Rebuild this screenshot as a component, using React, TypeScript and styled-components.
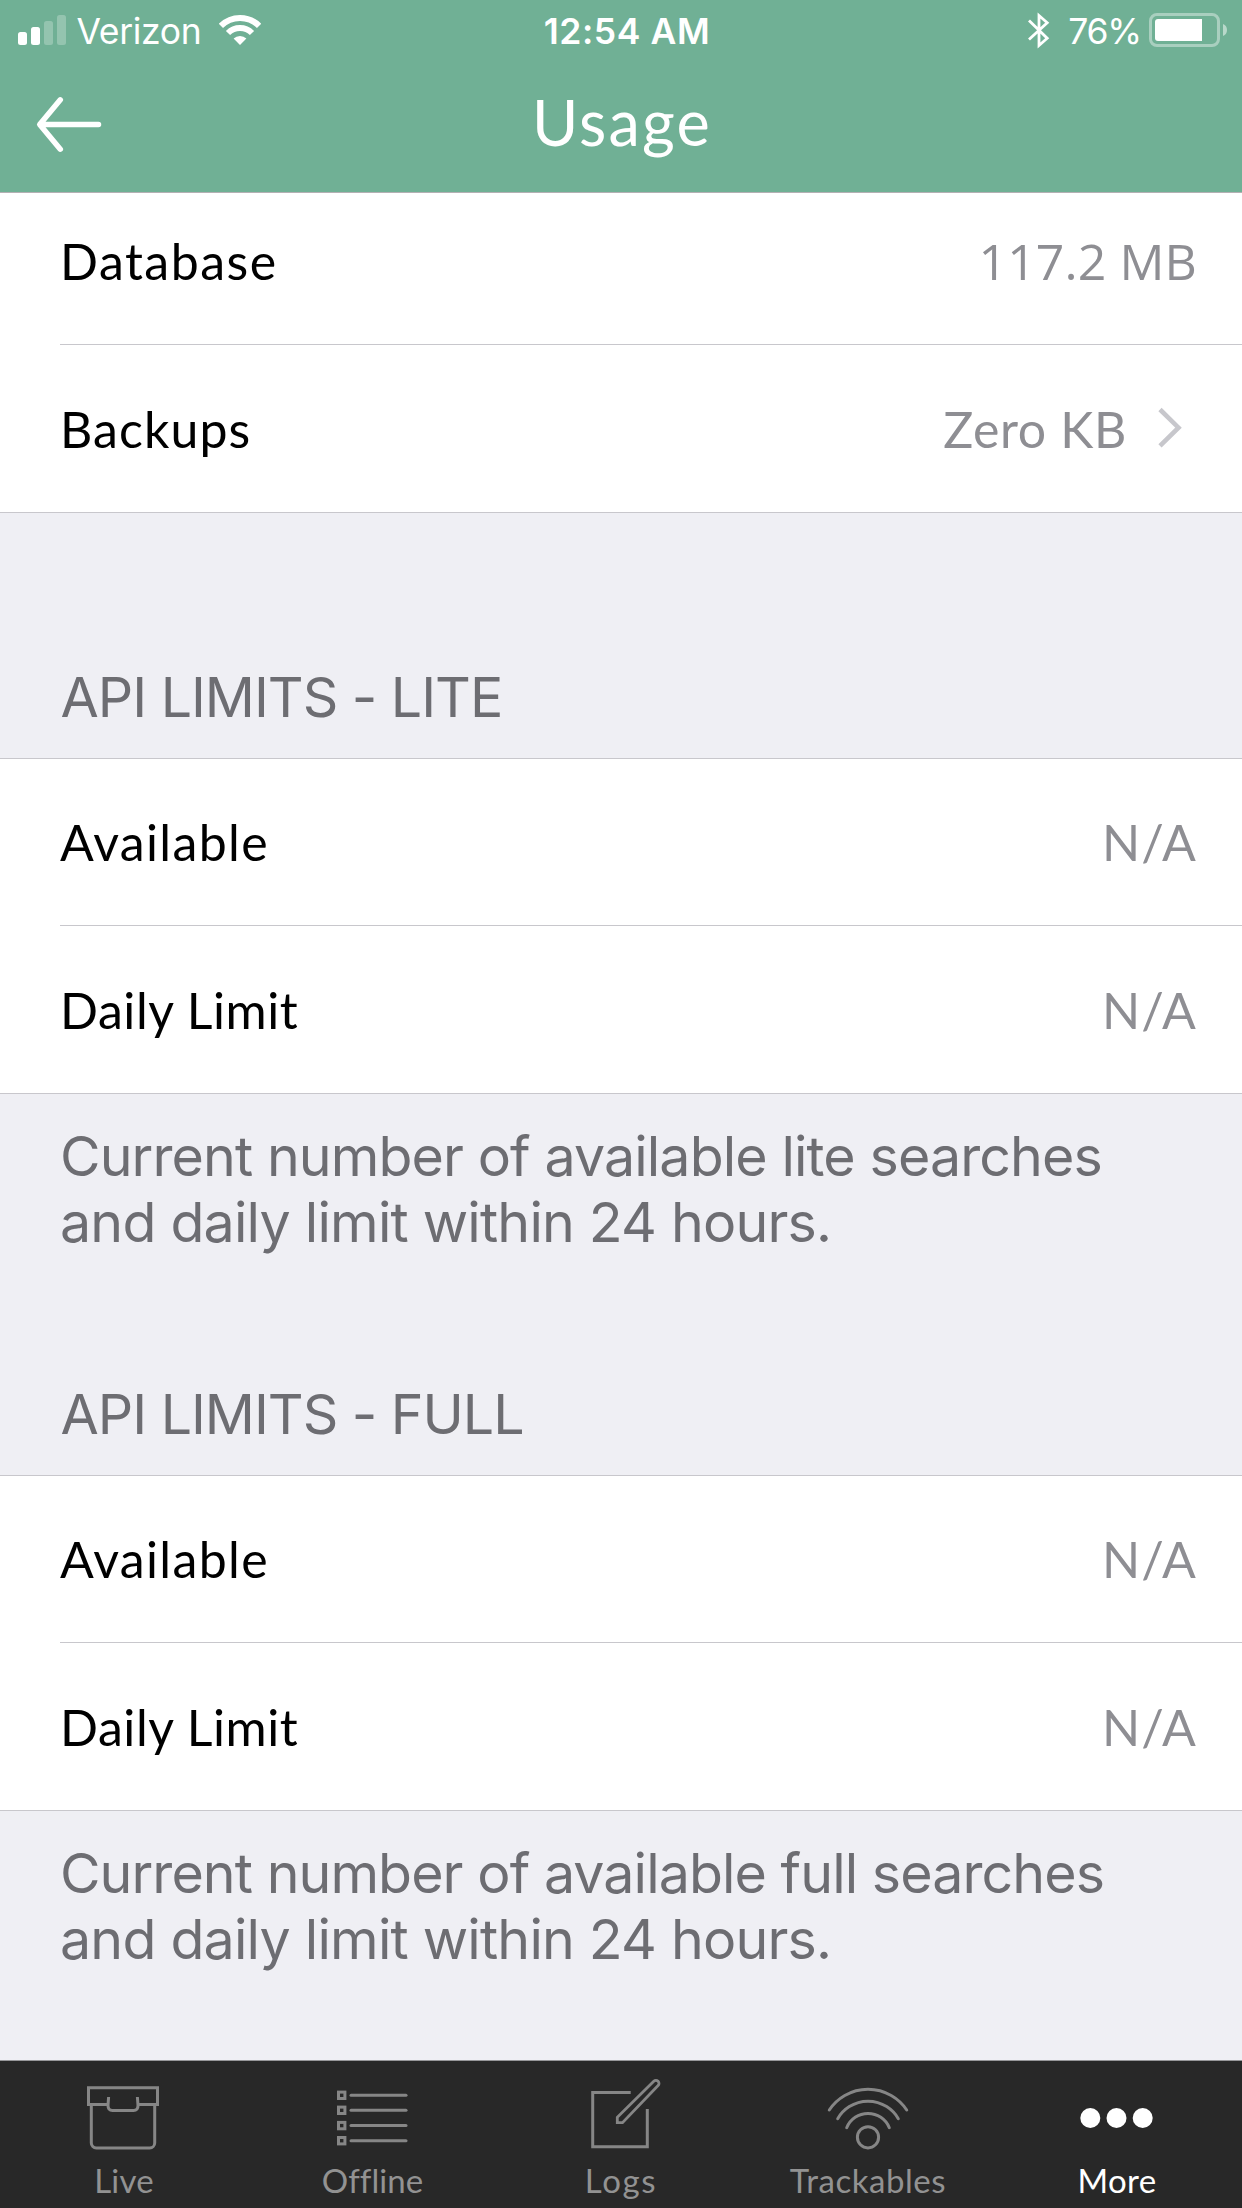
import React from 'react';
import styled, { createGlobalStyle } from 'styled-components';

const GlobalStyle = createGlobalStyle`
  * { box-sizing: border-box; }
  body { margin: 0; background: #efeff4; }
`;

const system = `Inter, "Liberation Sans", sans-serif`;
const brand = `Lato, "Open Sans", sans-serif`;

const Screen = styled.div`
  display: flex;
  flex-direction: column;
  width: 1242px;
  height: 2208px;
  overflow: hidden;
  background: #efeff4;
`;

const Header = styled.header`
  display: flex;
  flex-direction: column;
  height: 193px;
  flex: none;
  color: #fff;
  background: #70b095;
  border-bottom: 1px solid #b4b0b4;
`;

const StatusBar = styled.div`
  display: grid;
  grid-template-columns: 1fr auto 1fr;
  height: 60px;
  padding: 0 15px 0 18px;
`;

const StatusGroup = styled.div<{ $end?: boolean }>`
  display: flex;
  align-items: flex-start;
  justify-content: ${p => (p.$end ? 'flex-end' : 'flex-start')};
`;

const StatusIcon = styled.svg`
  display: block;
  flex: none;
  height: 60px;
`;

const StatusText = styled.span<{ $weight?: number; $spacing: number; $margin: string }>`
  margin: ${p => p.$margin};
  font: ${p => p.$weight ?? 400} 35.5px/43px ${system};
  letter-spacing: ${p => p.$spacing}px;
  white-space: nowrap;
`;

const NavBar = styled.nav`
  display: grid;
  grid-template-columns: 120px 1fr 120px;
  padding-top: 22px;
`;

const BackButton = styled.button`
  display: flex;
  padding: 0 0 0 30px;
  border: 0;
  color: inherit;
  background: none;
`;

const Title = styled.h1`
  margin: 0;
  padding: 2px 0 0 2px;
  font: 400 63px/75px ${brand};
  letter-spacing: 2.2px;
  text-align: center;
`;

const Group = styled.section`
  display: flex;
  flex-direction: column;
  background: #fff;
  border-bottom: 1px solid #c8c7cc;
`;

const Row = styled.div<{ $height: number; $chevron?: boolean }>`
  display: flex;
  align-items: flex-end;
  justify-content: space-between;
  height: ${p => p.$height}px;
  padding: 0 ${p => (p.$chevron ? 60 : 45)}px 53px 60px;
`;

const Separator = styled.div`
  height: 1px;
  margin-left: 60px;
  background: #c8c7cc;
`;

const Label = styled.span<{ $spacing: number }>`
  font: 400 50px/60px ${brand};
  letter-spacing: ${p => p.$spacing}px;
  color: #000;
`;

const Value = styled.span<{ $spacing: number; $numeric?: boolean }>`
  font: 400 50px/60px ${p => (p.$numeric ? '"Open Sans", sans-serif' : brand)};
  letter-spacing: ${p => p.$spacing}px;
  color: #8e8e93;
`;

const Detail = styled.div`
  display: flex;
  align-items: flex-end;
  gap: 31px;
`;

const Chevron = styled.svg`
  display: block;
  width: 24px;
  height: 60px;
`;

const SectionHeader = styled.h2<{ $height: number }>`
  display: flex;
  align-items: flex-end;
  height: ${p => p.$height}px;
  margin: 0;
  padding: 0 60px 28px 60.5px;
  border-bottom: 1px solid #c8c7cc;
  color: #6d6d72;
  font: 400 55.5px/67px ${system};
  letter-spacing: -1.03px;
`;

const Footnote = styled.p`
  display: flex;
  flex-direction: column;
  margin: 0;
  padding: 29px 0 0 60px;
  color: #6d6d72;
  font: 400 55.5px/66px ${system};
  white-space: nowrap;
`;

const FootnoteLine = styled.span<{ $spacing: number }>`
  letter-spacing: ${p => p.$spacing}px;
`;

const TabBar = styled.footer`
  display: grid;
  grid-template-columns: 246px 252px 246px 248px 250px;
  height: 148px;
  margin-top: auto;
  background: #282828;
  border-top: 1px solid #97979a;
`;

const Tab = styled.div<{ $active?: boolean }>`
  display: flex;
  flex-direction: column;
  align-items: center;
  padding-top: 10px;
  color: ${p => (p.$active ? '#fff' : '#929292')};
`;

const TabIcon = styled.svg`
  display: block;
  width: 90px;
  height: 80px;
  fill: none;
  stroke: #868686;
  stroke-width: 3;
`;

const TabLabel = styled.span<{ $spacing: number; $indent?: number }>`
  margin-top: 9px;
  padding-left: ${p => p.$indent ?? 0}px;
  font: 400 33px/40px ${brand};
  letter-spacing: ${p => p.$spacing}px;
`;

const LimitRows = () => (
  <Group>
    <Row $height={166}>
      <Label $spacing={1.35}>Available</Label>
      <Value $spacing={1.1}>N/A</Value>
    </Row>
    <Separator />
    <Row $height={167}>
      <Label $spacing={0.56}>Daily Limit</Label>
      <Value $spacing={1.1}>N/A</Value>
    </Row>
  </Group>
);

export default function App() {
  return (
    <Screen>
      <GlobalStyle />
      <Header>
        <StatusBar>
          <StatusGroup>
            <StatusIcon width="48" viewBox="0 0 48 60" fill="#fff">
              <rect x="0" y="32" width="9" height="13" rx="2.5" />
              <rect x="13" y="27" width="9" height="18" rx="2.5" />
              <rect x="26" y="21" width="9" height="24" rx="2.5" opacity=".25" />
              <rect x="39" y="15" width="9" height="30" rx="2.5" opacity=".25" />
            </StatusIcon>
            <StatusText $spacing={-0.35} $margin="10px 17.5px 0 10.5px">Verizon</StatusText>
            <StatusIcon width="42" viewBox="0 0 42 60" fill="none" stroke="#fff" strokeWidth="6">
              <path d="M1.9 25.9a27 27 0 0 1 38.2 0M9 33a17 17 0 0 1 24 0" />
              <path d="M21 45L14.6 38.6a9 9 0 0 1 12.8 0z" fill="#fff" stroke="none" />
            </StatusIcon>
          </StatusGroup>
          <StatusText $weight={600} $spacing={0.6} $margin="10px 0 0 9px">12:54 AM</StatusText>
          <StatusGroup $end>
            <StatusIcon width="22" viewBox="0 0 22 60" fill="none" stroke="#fff" strokeWidth="2.8">
              <path d="M1 20.5L19.2 38.3L11 45.5V15.5L19.2 22.7L1 39.5" />
            </StatusIcon>
            <StatusText $spacing={-1.2} $margin="10px 8px 0 18px">76%</StatusText>
            <StatusIcon width="78" viewBox="0 0 78 60" fill="#fff">
              <rect x="1.5" y="14.5" width="68" height="31" rx="6.5" fill="none" stroke="#fff" strokeWidth="3" opacity=".4" />
              <path d="M9 19H53V41H9a3 3 0 0 1-3-3V22a3 3 0 0 1 3-3z" />
              <path d="M74 24q4 1.5 4 6t-4 6z" opacity=".5" />
            </StatusIcon>
          </StatusGroup>
        </StatusBar>
        <NavBar>
          <BackButton aria-label="Back">
            <svg width="80" height="75" viewBox="30 82 80 75" fill="none" stroke="#fff" strokeWidth="5.5" strokeLinecap="round" strokeLinejoin="round">
              <path d="M60.3 99.8L39.7 124.5L60.3 149.2M40 124.5H98.5" />
            </svg>
          </BackButton>
          <Title>Usage</Title>
        </NavBar>
      </Header>

      <Group>
        <Row $height={151}>
          <Label $spacing={1.5}>Database</Label>
          <Value $numeric $spacing={0.1}>117.2 MB</Value>
        </Row>
        <Separator />
        <Row $height={167} $chevron>
          <Label $spacing={1.1}>Backups</Label>
          <Detail>
            <Value $spacing={0.65}>Zero KB</Value>
            <Chevron viewBox="0 0 24 60" fill="none" stroke="#c7c7cc" strokeWidth="4.6">
              <path d="M2 10.5L20.5 28.7L2 46.9" />
            </Chevron>
          </Detail>
        </Row>
      </Group>

      <SectionHeader $height={246}>API LIMITS - LITE</SectionHeader>
      <LimitRows />
      <Footnote>
        <FootnoteLine $spacing={-0.89}>Current number of available lite searches</FootnoteLine>
        <FootnoteLine $spacing={-0.79}>and daily limit within 24 hours.</FootnoteLine>
      </Footnote>

      <SectionHeader $height={221}>API LIMITS - FULL</SectionHeader>
      <LimitRows />
      <Footnote>
        <FootnoteLine $spacing={-0.92}>Current number of available full searches</FootnoteLine>
        <FootnoteLine $spacing={-0.79}>and daily limit within 24 hours.</FootnoteLine>
      </Footnote>

      <TabBar>
        <Tab>
          <TabIcon viewBox="0 0 90 80">
            <path d="M30 33.5H10.5V16.7H79.5V33.5H60" />
            <path d="M13.3 33.5V72a5 5 0 0 0 5 5H71.7a5 5 0 0 0 5-5V33.5" />
            <path d="M30.6 26L30 34.5q0 5 4.5 5H55.5q4.5 0 4.5-5L59.4 26" />
          </TabIcon>
          <TabLabel $spacing={0.2} $indent={2}>Live</TabLabel>
        </Tab>
        <Tab>
          <TabIcon viewBox="0 0 90 80">
            {[24.3, 39.3, 54.6, 69.7].map(y => (
              <React.Fragment key={y}>
                <rect x="11.5" y={y - 3.2} width="6.4" height="6.4" />
                <path d={`M24 ${y}H79`} strokeLinecap="round" />
              </React.Fragment>
            ))}
          </TabIcon>
          <TabLabel $spacing={0.05} $indent={1}>Offline</TabLabel>
        </Tab>
        <Tab>
          <TabIcon viewBox="0 0 90 80">
            <path d="M54.7 21.4H16.7V75.7H71.3V38" />
            <path d="M41.3 51.7V46.3L77.8 10.3a3 3 0 0 1 4.3 4.3L46.5 51.7z" strokeWidth="2.8" />
          </TabIcon>
          <TabLabel $spacing={1.7}>Logs</TabLabel>
        </Tab>
        <Tab>
          <TabIcon viewBox="0 0 90 80" strokeLinecap="round">
            <circle cx="45" cy="66.3" r="10.6" />
            <path d="M6.3 39A46.5 46.5 0 0 1 83.7 39M14.7 47.7A35 35 0 0 1 75.3 47.7M23.7 56.7A23 23 0 0 1 66.3 56.7" />
          </TabIcon>
          <TabLabel $spacing={0.54}>Trackables</TabLabel>
        </Tab>
        <Tab $active>
          <TabIcon viewBox="0 0 90 80">
            {[18.3, 44.5, 70.7].map(cx => (
              <circle key={cx} cx={cx} cy="47" r="10" fill="#fff" stroke="none" />
            ))}
          </TabIcon>
          <TabLabel $spacing={0.4}>More</TabLabel>
        </Tab>
      </TabBar>
    </Screen>
  );
}
